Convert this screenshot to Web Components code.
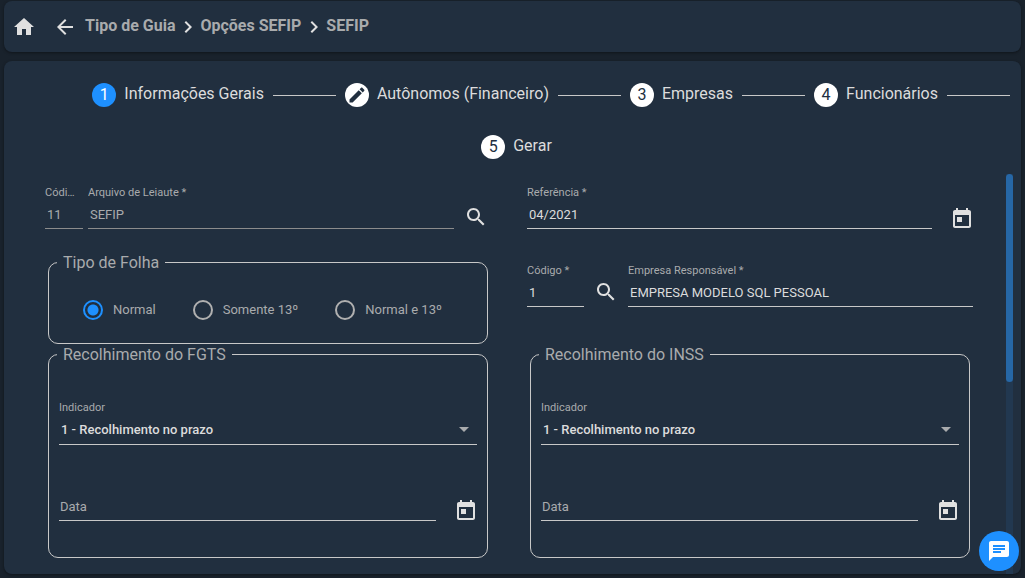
<!DOCTYPE html>
<html lang="pt-BR">
<head>
<meta charset="utf-8">
<meta name="viewport" content="width=device-width, initial-scale=1">
<title>SEFIP</title>
<style>
  :root {
    --page: #19222c;
    --panel: #212f3f;
    --accent: #1e90ff;
    --text: #dcdcdc;
    --muted: #a9abad;
    --line: #c8c8c8;
  }

  body {
    margin: 0;
    background: var(--page);
    color: var(--text);
    font-family: Roboto, "Liberation Sans", sans-serif;
    font-size: 13px;
  }
</style>
</head>
<body>
<sefip-page></sefip-page>

<script>
const ICONS = {
  home: 'M10 20v-6h4v6h5v-8h3L12 3 2 12h3v8z',
  back: 'M20 11H7.83l5.59-5.59L12 4l-8 8 8 8 1.41-1.41L7.83 13H20v-2z',
  chevron: 'M10 6L8.59 7.41 13.17 12l-4.58 4.59L10 18l6-6z',
  edit: 'M3 17.25V21h3.75L17.81 9.94l-3.75-3.75L3 17.25zM20.71 7.04c.39-.39.39-1.02 0-1.41l-2.34-2.34c-.39-.39-1.02-.39-1.41 0l-1.83 1.83 3.75 3.75 1.83-1.83z',
  search: 'M15.5 14h-.79l-.28-.27C15.41 12.59 16 11.11 16 9.5 16 5.91 13.09 3 9.5 3S3 5.91 3 9.5 5.91 16 9.5 16c1.61 0 3.09-.59 4.23-1.57l.27.28v.79l5 4.99L20.49 19l-4.99-5zm-6 0C7.01 14 5 11.99 5 9.5S7.01 5 9.5 5 14 7.01 14 9.5 11.99 14 9.5 14z',
  calendar: 'M19 3h-1V1h-2v2H8V1H6v2H5c-1.11 0-1.99.9-1.99 2L3 19c0 1.1.89 2 2 2h14c1.1 0 2-.9 2-2V5c0-1.1-.9-2-2-2zm0 16H5V8h14v11zM7 10h5v5H7z',
  arrow: 'M7 10l5 5 5-5z',
  chat: 'M20 2H4c-1.1 0-1.99.9-1.99 2L2 22l4-4h14c1.1 0 2-.9 2-2V4c0-1.1-.9-2-2-2zM6 9h12v2H6V9zm8 5H6v-2h8v2zm4-6H6V6h12v2z'
};

class BaseElement extends HTMLElement {
  constructor() {
    super();
    this.attachShadow({ mode: 'open' });
  }

  connectedCallback() {
    this.shadowRoot.innerHTML = this.render();
  }

  attr(name) {
    return this.getAttribute(name) || '';
  }
}

class AppIcon extends BaseElement {
  render() {
    return `
      <style>
        :host { display: block; width: 24px; height: 24px; flex: none; }
        svg { display: block; width: 100%; height: 100%; fill: currentColor; }
      </style>
      <svg viewBox="0 0 24 24" aria-hidden="true"><path d="${ICONS[this.attr('name')]}"/></svg>
    `;
  }
}

class IconButton extends BaseElement {
  render() {
    return `
      <style>
        :host { display: block; flex: none; }
        button {
          display: block;
          padding: 0;
          border: 0;
          background: none;
          color: #e0e0e0;
          cursor: pointer;
        }
      </style>
      <button type="button" aria-label="${this.attr('label')}"><app-icon name="${this.attr('icon')}"></app-icon></button>
    `;
  }
}

class AppHeader extends BaseElement {
  render() {
    return `
      <style>
        :host {
          display: block;
          background: var(--panel);
          border-radius: 8px;
          box-shadow: 0 1px 3px rgba(0, 0, 0, 0.4);
        }
        nav {
          display: flex;
          align-items: center;
          min-height: 51px;
          padding: 0 8px;
        }
        .back { margin: 0 8px 0 17px; }
        a {
          padding: 0 1px 2px 0;
          color: var(--muted);
          font-size: 16px;
          font-weight: 700;
          line-height: 20px;
          text-decoration: none;
        }
        app-icon { color: #e0e0e0; }
      </style>
      <nav aria-label="Navegação">
        <icon-button icon="home" label="Início"></icon-button>
        <icon-button class="back" icon="back" label="Voltar"></icon-button>
        <a href="#guia">Tipo de Guia</a>
        <app-icon name="chevron"></app-icon>
        <a href="#opcoes">Opções SEFIP</a>
        <app-icon name="chevron"></app-icon>
        <a href="#sefip" aria-current="page">SEFIP</a>
      </nav>
    `;
  }
}

class StepItem extends BaseElement {
  render() {
    const mark = this.hasAttribute('edit')
      ? '<app-icon class="pen" name="edit"></app-icon>'
      : this.attr('number');
    return `
      <style>
        :host { display: flex; align-items: center; gap: 9px; }
        button {
          display: flex;
          align-items: center;
          gap: 8px;
          padding: 0;
          border: 0;
          background: none;
          color: var(--text);
          font: inherit;
          font-size: 16px;
          line-height: 20px;
          white-space: nowrap;
          cursor: pointer;
        }
        .mark {
          display: flex;
          align-items: center;
          justify-content: center;
          width: 24px;
          height: 24px;
          border-radius: 50%;
          background: #fff;
          color: #212f3f;
        }
        :host([active]) .mark { background: var(--accent); color: #fff; }
        .pen { width: 20px; height: 20px; }
        .label { padding-bottom: 2px; }
        :host([last]) .line { display: none; }
        .line { width: 63px; height: 1px; background: var(--line); }
      </style>
      <button type="button"><span class="mark">${mark}</span><span class="label"><slot></slot></span></button>
      <span class="line"></span>
    `;
  }
}

class AppStepper extends BaseElement {
  render() {
    return `
      <style>
        :host { display: flex; flex-direction: column; gap: 28px; padding: 22px 11px 15px; }
        div { display: flex; flex-wrap: wrap; gap: 9px; justify-content: flex-end; }
        .last { justify-content: center; padding-left: 8px; }
      </style>
      <div>
        <step-item number="1" active>Informações Gerais</step-item>
        <step-item number="2" edit>Autônomos (Financeiro)</step-item>
        <step-item number="3">Empresas</step-item>
        <step-item number="4">Funcionários</step-item>
      </div>
      <div class="last"><step-item number="5" last>Gerar</step-item></div>
    `;
  }
}

const FIELD_CSS = `
  :host { display: block; flex: 1; min-width: 0; }
  label {
    display: block;
    padding-right: 6px;
    overflow: hidden;
    color: var(--muted);
    font-size: 11px;
    line-height: 18px;
    text-overflow: ellipsis;
    white-space: nowrap;
  }
  input, select {
    display: block;
    box-sizing: border-box;
    width: 100%;
    height: 27px;
    margin: 0;
    padding: 0 2px 2px;
    border: 0;
    border-bottom: 1px solid var(--line);
    border-radius: 0;
    outline: 0;
    background: none;
    color: var(--text);
    font: inherit;
    font-size: 13px;
  }
`;

class TextField extends BaseElement {
  render() {
    return `
      <style>
        ${FIELD_CSS}
        :host([locked]) input { color: var(--muted); border-color: #8c8c8c; }
        /* empty field: the label rests over the input */
        :host([empty]) .field { display: grid; }
        :host([empty]) label, :host([empty]) input { grid-area: 1 / 1; }
        :host([empty]) label { padding-left: 1px; font-size: 13px; line-height: 28px; }
        :host([empty]) input { height: 28px; }
      </style>
      <div class="field">
        <label for="input">${this.attr('label')}</label>
        <input id="input" type="text" value="${this.attr('value')}" ${this.hasAttribute('locked') ? 'readonly' : ''}>
      </div>
    `;
  }
}

class SelectField extends BaseElement {
  render() {
    return `
      <style>
        ${FIELD_CSS}
        select { appearance: none; font-weight: 500; }
        option { color: #212f3f; }
        .box { display: grid; align-items: center; }
        .box > * { grid-area: 1 / 1; }
        app-icon { justify-self: end; margin: 0 1px 4px 0; color: var(--muted); pointer-events: none; }
      </style>
      <label for="select">${this.attr('label')}</label>
      <div class="box">
        <select id="select"><option>${this.attr('value')}</option></select>
        <app-icon name="arrow"></app-icon>
      </div>
    `;
  }
}

class DateField extends BaseElement {
  render() {
    return `
      <style>
        :host { display: flex; align-items: flex-end; gap: 18px; }
        icon-button { margin: 0 -1px -2px 0; }
      </style>
      <text-field label="${this.attr('label')}" value="${this.attr('value')}" ${this.hasAttribute('empty') ? 'empty' : ''}></text-field>
      <icon-button icon="calendar" label="Abrir calendário"></icon-button>
    `;
  }
}

class GroupBox extends BaseElement {
  render() {
    return `
      <style>
        :host { display: block; padding: 0 3px; }
        fieldset {
          min-width: 0;
          margin: 0;
          padding: 0 8px;
          border: 1px solid var(--line);
          border-radius: 10px;
        }
        legend {
          padding: 2px 6px 0;
          color: var(--muted);
          font-size: 16px;
          line-height: 18px;
        }
      </style>
      <fieldset><legend>${this.attr('legend')}</legend><slot></slot></fieldset>
    `;
  }
}

class RadioOptions extends BaseElement {
  render() {
    const options = ['Normal', 'Somente 13º', 'Normal e 13º'];
    return `
      <style>
        :host { display: flex; flex-wrap: wrap; gap: 37px; padding: 28px 26px 23px; }
        label {
          display: flex;
          align-items: center;
          gap: 10px;
          color: var(--muted);
          line-height: 20px;
          white-space: nowrap;
        }
        input {
          appearance: none;
          box-sizing: border-box;
          width: 20px;
          height: 20px;
          margin: 0;
          border: 2px solid #b0b0b0;
          border-radius: 50%;
        }
        input:checked {
          border-color: var(--accent);
          background: radial-gradient(circle, var(--accent) 5px, transparent 6px);
        }
      </style>
      ${options.map((text, i) => `<label><input type="radio" name="folha" ${i ? '' : 'checked'}>${text}</label>`).join('')}
    `;
  }
}

class CollectionBox extends BaseElement {
  render() {
    return `
      <style>
        :host { display: block; }
        .fields { display: flex; flex-direction: column; gap: 48px; padding: 35px 2px 36px; }
      </style>
      <group-box legend="${this.attr('legend')}">
        <div class="fields">
          <select-field label="Indicador" value="1 - Recolhimento no prazo"></select-field>
          <date-field label="Data" empty></date-field>
        </div>
      </group-box>
    `;
  }
}

class SefipForm extends BaseElement {
  render() {
    return `
      <style>
        :host { display: flex; min-height: 0; padding-right: 8px; }
        form {
          display: grid;
          flex: 1;
          grid-template-columns: 1fr 1fr;
          column-gap: 36px;
          align-content: start;
          align-items: start;
          padding: 10px 33px 16px 41px;
        }
        .row { display: flex; align-items: flex-end; gap: 10px; }
        .layout { padding-right: 3px; }
        .pair { display: flex; flex: 1; gap: 5px; }
        .pair .code { flex: 0 0 38px; }
        .row > .code { flex: 0 0 57px; }
        .second { margin-top: 23px; }
        .company { margin-top: 33px; }
        .company icon-button { margin-bottom: 3px; }
        .track { width: 7px; background: #223850; }
        .thumb { height: 52%; border-radius: 4px; background: #2667a6; }
      </style>
      <form>
        <div class="row layout">
          <div class="pair">
            <text-field class="code" label="Código *" value="11" locked></text-field>
            <text-field label="Arquivo de Leiaute *" value="SEFIP" locked></text-field>
          </div>
          <icon-button icon="search" label="Pesquisar arquivo"></icon-button>
        </div>
        <date-field label="Referência *" value="04/2021"></date-field>
        <group-box class="second" legend="Tipo de Folha"><radio-options></radio-options></group-box>
        <div class="row company">
          <text-field class="code" label="Código *" value="1"></text-field>
          <icon-button icon="search" label="Pesquisar empresa"></icon-button>
          <text-field label="Empresa Responsável *" value="EMPRESA MODELO SQL PESSOAL"></text-field>
        </div>
        <collection-box legend="Recolhimento do FGTS"></collection-box>
        <collection-box legend="Recolhimento do INSS"></collection-box>
      </form>
      <div class="track"><div class="thumb"></div></div>
    `;
  }
}

class ChatButton extends BaseElement {
  render() {
    return `
      <style>
        :host { position: fixed; right: 6px; bottom: 7px; }
        button {
          display: flex;
          align-items: center;
          justify-content: center;
          width: 40px;
          height: 40px;
          padding: 0;
          border: 0;
          border-radius: 50%;
          background: var(--accent);
          color: #fff;
          cursor: pointer;
        }
      </style>
      <button type="button" aria-label="Chat"><app-icon name="chat"></app-icon></button>
    `;
  }
}

class SefipPage extends BaseElement {
  render() {
    return `
      <style>
        :host {
          display: flex;
          flex-direction: column;
          gap: 9px;
          box-sizing: border-box;
          min-height: 100vh;
          padding: 1px 4px 5px;
        }
        main {
          display: flex;
          flex: 1;
          flex-direction: column;
          background: var(--panel);
          border-radius: 8px;
          box-shadow: 0 1px 3px rgba(0, 0, 0, 0.4);
        }
        sefip-form { flex: 1; }
      </style>
      <app-header></app-header>
      <main>
        <app-stepper></app-stepper>
        <sefip-form></sefip-form>
      </main>
      <chat-button></chat-button>
    `;
  }
}

customElements.define('app-icon', AppIcon);
customElements.define('icon-button', IconButton);
customElements.define('app-header', AppHeader);
customElements.define('step-item', StepItem);
customElements.define('app-stepper', AppStepper);
customElements.define('text-field', TextField);
customElements.define('select-field', SelectField);
customElements.define('date-field', DateField);
customElements.define('group-box', GroupBox);
customElements.define('radio-options', RadioOptions);
customElements.define('collection-box', CollectionBox);
customElements.define('sefip-form', SefipForm);
customElements.define('chat-button', ChatButton);
customElements.define('sefip-page', SefipPage);
</script>
</body>
</html>
